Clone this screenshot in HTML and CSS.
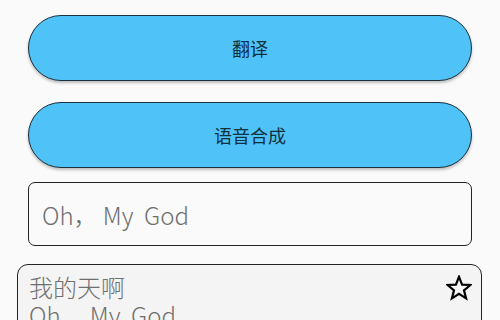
FILE: index.html
```html
<!DOCTYPE html>
<html>
<head>
<meta charset="utf-8">
<link rel="stylesheet" href="styles.css">
</head>
<body>
<div class="page">
  <div class="controls">
    <div class="btn btn-first">翻译</div>
    <div class="btn btn-second">语音合成</div>
    <div class="input">Oh， My  God</div>
  </div>
  <div class="card">
    <div class="card-text">
      <div class="card-cn">我的天啊</div>
      <div class="card-en">Oh， My  God</div>
    </div>
    <svg class="star" viewBox="0 0 26 26" width="26" height="26">
      <polygon points="13,1.8 16.1,9.6 24.4,10 18,15.3 20.1,23.4 13,18.9 5.9,23.4 8,15.3 1.6,10 9.9,9.6" fill="none" stroke="#000" stroke-width="2.2" stroke-linejoin="miter"/>
    </svg>
  </div>
</div>
</body>
</html>
```
FILE: styles.css
```css
html, body {
  margin: 0;
  padding: 0;
  background: #fafafa;
  width: 500px;
  height: 320px;
  overflow: hidden;
  font-family: "Noto Sans CJK SC", "Noto Sans", sans-serif;
}
.page {
  display: flex;
  flex-direction: column;
  padding-top: 15px;
}
.controls {
  display: flex;
  flex-direction: column;
  padding: 0 28px 0 28px;
}
.btn {
  height: 64px;
  border: 1.5px solid #1b2f3c;
  border-radius: 34px;
  background: #4fc3f7;
  display: flex;
  align-items: center;
  justify-content: center;
  font-size: 18px;
  color: #10303f;
  box-shadow: 0 2px 3px rgba(0,0,0,0.25);
}
.btn-second {
  margin-top: 21px;
}
.input {
  margin-top: 14px;
  height: 62px;
  border: 1.5px solid #222;
  border-radius: 7px;
  display: flex;
  align-items: center;
  padding-left: 13px;
  font-size: 24px;
  font-weight: 300;
  color: #6e6e6e;
  white-space: pre;
}
.card {
  margin: 18px 18px 0 17px;
  height: 80px;
  border: 1.5px solid #222;
  border-radius: 11px;
  background: #f4f4f4;
  display: flex;
  justify-content: space-between;
  align-items: flex-start;
  padding: 9px 9px 0 11px;
}
.card-text {
  display: flex;
  flex-direction: column;
  font-size: 24px;
  font-weight: 300;
  color: #707070;
}
.card-cn {
  line-height: 26px;
}
.card-en {
  white-space: pre;
  line-height: 30px;
}
.star {
  margin-top: 1px;
}
```
